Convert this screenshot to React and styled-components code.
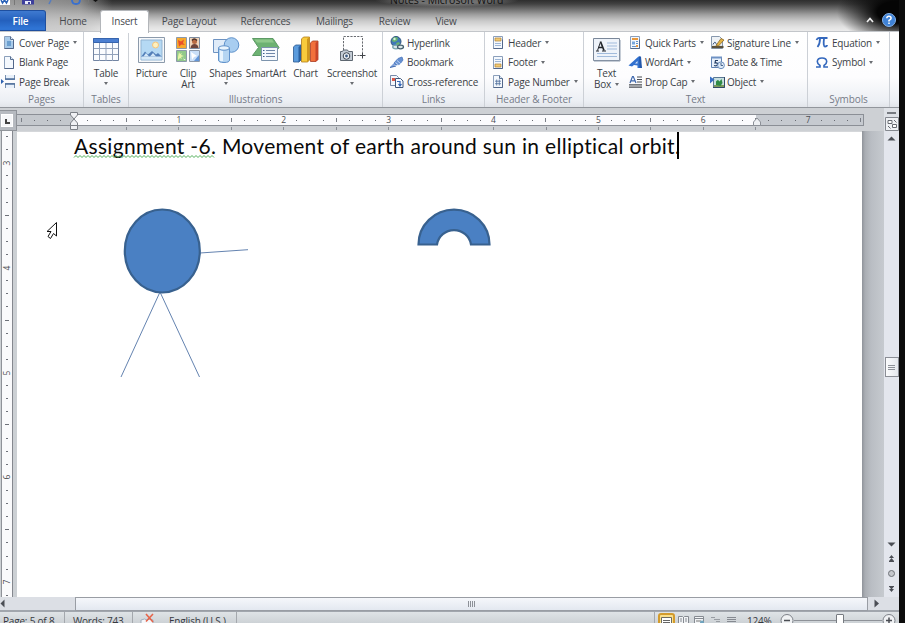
import React from "react";
import styled, { createGlobalStyle } from "styled-components";

const Global = createGlobalStyle`
  * { box-sizing: border-box; }
  html, body { margin: 0; background: #0c0c0c; overflow: hidden; }
  body { font-family: "Open Sans", "Noto Sans", sans-serif; font-size: 10px; letter-spacing: -0.2px; color: #3b3f46; }
  svg { display: block; flex: none; overflow: visible; }
`;

const Screen = styled.div`
  width: 905px; height: 623px; overflow: hidden; background: #0c0c0c;
`;
const Window = styled.div`
  width: 899px; height: 623px; display: flex; flex-direction: column; overflow: hidden; background: #c8ccd1;
`;

/* ---------- title and tabs ---------- */
const Top = styled.header`
  height: 32px; flex: none; display: flex; flex-direction: column; position: relative;
  border-bottom: 1px solid #c3c6ca;
  background:
    radial-gradient(ellipse 62px 32px at 899px 12px, #050505 35%, rgba(5,5,5,0) 100%),
    linear-gradient(90deg, rgba(190,190,190,.75), rgba(190,190,190,.6) 80px, rgba(190,190,190,0) 112px),
    linear-gradient(#2e2e2e 0, #424242 4px, #6d6d6d 9px, #a2a2a2 15px, #cacaca 21px, #e2e2e2 27px, #ececec 31px);
`;
const TitleBar = styled.div`
  height: 10px; flex: none; display: flex; align-items: flex-start; overflow: hidden;
`;
const QuickAccess = styled.div`
  width: 376px; height: 10px; flex: none;
`;
const Title = styled.div`
  width: 142px; padding-left: 14px; font-size: 10.5px; letter-spacing: 0; line-height: 14px; margin-top: -7px; white-space: nowrap; color: #111;
  background: radial-gradient(ellipse at center, rgba(150,150,150,.6) 40%, rgba(150,150,150,0) 72%);
`;
const Tabs = styled.nav`
  height: 22px; flex: none; display: flex; align-items: stretch;
`;
const Tab = styled.div`
  width: ${p => p.$w}px; flex: none; display: flex; align-items: center; justify-content: center;
  white-space: nowrap; color: #46494e; padding-bottom: 1px;
`;
const FileTab = styled(Tab)`
  color: #fff; font-weight: 600; padding-right: 4px; margin-bottom: 1px; padding-bottom: 0;
  background: linear-gradient(#3f7ad0, #2460bd 50%, #2f74d4 90%);
  border: 1px solid #1e4f9f; border-left: 0; border-radius: 0 3px 0 0;
`;
const ActiveTab = styled(Tab)`
  background: #fff; border: 1px solid #b3b6ba; border-bottom: 0; border-radius: 3px 3px 0 0;
  margin-bottom: -1px; padding-bottom: 3px; z-index: 1; 
`;
const TopRight = styled.div`
  margin-left: auto; display: flex; align-items: center; gap: 8px; padding-right: 3px; padding-bottom: 2px;
`;

/* ---------- ribbon ---------- */
const Ribbon = styled.section`
  height: 76px; flex: none; display: flex; border-bottom: 1px solid #92969c;
  background: linear-gradient(#fff, #fdfdfe 60%, #eceff4 92%, #e2e5ea);
`;
const Group = styled.div`
  width: ${p => p.$w}px; flex: none; display: flex; flex-direction: column;
  border-right: 1px solid #ccd0d6;
`;
const GroupBody = styled.div`
  height: 60px; flex: none; display: flex; padding-left: ${p => p.$pad || 0}px; padding-top: 1px;
`;
const GroupName = styled.div`
  height: 14px; line-height: 14px; text-align: center; color: #767b88; white-space: nowrap; letter-spacing: -0.1px;
`;
const Column = styled.div`
  width: ${p => p.$w}px; flex: none; display: flex; flex-direction: column;
`;
const SmallButton = styled.div`
  height: 19.5px; display: flex; align-items: center; white-space: nowrap;
`;
const IconSlot = styled.span`
  width: ${p => p.$w}px; flex: none; display: flex;
`;
const Caret = styled.i`
  width: 0; height: 0; flex: none; border: 2.5px solid transparent; border-top: 3px solid #6a6d72; border-bottom: 0;
  margin: ${p => (p.$big ? "3px 0 0" : "0 0 0 4px")};
`;
const BigButton = styled.div`
  width: ${p => p.$w}px; flex: none; display: flex; flex-direction: column; align-items: center; padding-top: 3px;
`;
const BigIcon = styled.div`
  height: 27px; display: flex; align-items: center;
`;
const BigLabel = styled.div`
  display: flex; flex-direction: column; align-items: center;
  font-size: 10px; line-height: 11px; margin-top: 5px; white-space: nowrap;
`;
const LabelLine = styled.span`
  display: flex; align-items: center; height: 11px;
`;

/* ---------- rulers ---------- */
const RulerBar = styled.div`
  height: 23px; flex: none; display: flex; background: #cdd0d4;
`;
const TabBox = styled.div`
  width: 17px; height: 21px; margin-top: 2px; flex: none; background: #b6bac0; border: 1px solid #8f9399; border-left: 0;
  display: flex; align-items: center; justify-content: center; padding-right: 2px;
`;
const TabGlyph = styled.div`
  width: 12px; height: 13px; background: #f6f7f9; border: 1px solid #fff; padding: 4px 0 0 3px;
`;
const TabMark = styled.div`
  width: 5px; height: 5px; border-left: 2px solid #444; border-bottom: 2px solid #444;
`;
const RulerMain = styled.div`
  width: 847px; flex: none; position: relative; padding-top: 6px;
`;
const RulerStrip = styled.div`
  height: 12px; display: flex; overflow: hidden; border: 1px solid #8b8f96; border-left: 0;
  background: linear-gradient(90deg, #c4c8cd 56px, #fbfbfd 56px, #fbfbfd 739px, #c6cad0 739px);
`;
const Cell = styled.span`
  width: 13.11px; height: 10px; flex: none; display: flex; align-items: center; justify-content: center;
  font-size: 8.5px; line-height: 10px; letter-spacing: 0; color: #4d4f54;
  &:first-child { margin-left: -2px; }
`;
const Tick = styled.i`
  width: 1px; height: ${p => (p.$tall ? 4 : 1)}px; background: ${p => (p.$tall ? "#7b7f87" : "#686b72")};
`;
const SubTicks = styled.div`
  height: 3px; margin: 1px 0 0 109px; display: flex;
`;
const SubTick = styled.i`
  width: 52.44px; height: 3px; flex: none; border-left: 1px solid #8b8f96;
`;
const Marker = styled.svg`
  position: absolute; left: ${p => p.$x}px; top: ${p => p.$y}px;
`;
const RulerCorner = styled.div`
  margin-left: auto; width: 15px; background: #dfe2e7; display: flex; flex-direction: column; align-items: center; gap: 3px; padding-top: 4px;
`;
const SplitHandle = styled.div`
  width: 9px; height: 2px; background: #777b81;
`;

/* ---------- document ---------- */
const Body = styled.div`
  height: 466px; flex: none; display: flex;
`;
const VRuler = styled.div`
  width: 17px; flex: none; padding-left: 1px; background: #ccd0d4;
`;
const VStrip = styled.div`
  width: 12px; height: 466px; overflow: hidden; background: #fafafc; border-left: 1px solid #8f9299; border-right: 1px solid #85888f;
`;
const VCell = styled.div`
  height: 13.11px; display: flex; align-items: center; justify-content: center;
  font-size: 8.5px; color: #4d4f54; letter-spacing: 0;
  &:first-child { margin-top: -1px; }
`;
const VNum = styled.span`
  transform: rotate(-90deg); line-height: 10px;
`;
const VTick = styled.i`
  width: ${p => (p.$tall ? 4 : 2)}px; height: 1px; background: #6e717a;
`;
const Page = styled.main`
  width: 845px; flex: none; position: relative; background: #fff; border-top: 1px solid #d5d7da; padding: 0 0 0 57px;
`;
const Heading = styled.div`
  font-family: Lato, "Noto Sans", sans-serif; font-size: 21px; letter-spacing: 0.31px; line-height: 28px; color: #0a0a0a;
  white-space: nowrap; display: flex;
`;
const Flagged = styled.span`
  position: relative;
`;
const Squiggle = styled.svg`
  position: absolute; left: 0; top: 22px;
`;
const TextCaret = styled.i`
  position: absolute; left: 660px; top: 0; width: 1.5px; height: 27px; background: #000;
`;
const Drawing = styled.svg`
  position: absolute; left: 0; top: -1px;
`;
const Gutter = styled.div`
  width: 22px; flex: none; background: linear-gradient(90deg, #8f939a, #a9adb3 3px, #b9bdc3 9px, #c6cacf);
`;
const VScroll = styled.div`
  width: 15px; flex: none; background: #e3e6ed; display: flex; flex-direction: column; align-items: center;
`;
const Spacer = styled.div`
  height: ${p => p.$h}px; flex: none;
`;
const VThumb = styled.div`
  width: 14px; height: 20px; flex: none; border: 1px solid #8b8e95; background: linear-gradient(90deg, #fbfcfd, #e4e7ec);
  display: flex; flex-direction: column; align-items: center; justify-content: center; gap: 1px;
`;
const Grip = styled.i`
  width: ${p => (p.$v ? 1 : 7)}px; height: ${p => (p.$v ? 6 : 1)}px; background: #8d9198;
`;
const HScroll = styled.div`
  height: 15px; flex: none; display: flex; align-items: center; background: #dcdfe5; border-bottom: 2px solid #a1a6ad;
`;
const ArrowBox = styled.div`
  width: ${p => p.$w}px; flex: none; display: flex;
`;
const HThumb = styled.div`
  width: 793px; height: 14px; flex: none; border: 1px solid #999da4; background: linear-gradient(#f5f7fb, #e3e8f0);
  display: flex; align-items: center; justify-content: center; gap: 1px;
`;

/* ---------- status ---------- */
const Status = styled.footer`
  height: 20px; flex: none; display: flex; align-items: flex-start; background: linear-gradient(#dfe3e6, #cdd2d6 11px);
  color: #36393f; white-space: nowrap;
`;
const StatusItem = styled.div`
  width: ${p => p.$w}px; height: 20px; flex: none; padding: 2px 0 0 ${p => p.$pad}px; line-height: 14px; border-right: 1px solid #a4a8ad; display: flex;
`;
const Views = styled.div`
  margin-left: auto; display: flex; width: 245px; flex: none; border-left: 1px solid #a4a8ad;
`;
const ViewButton = styled.div`
  width: ${p => (p.$on ? 17 : 16)}px; height: 18px; flex: none; display: flex; justify-content: center; padding-top: ${p => (p.$on ? 2 : 4)}px;
  ${p => p.$on && "margin: 1px 0 0 3px; border: 2px solid #d39b2c; border-radius: 3px; background: #fbe08b;"}
`;
const Percent = styled.div`
  width: 32px; line-height: 14px; padding-top: 2px; padding-left: 8px; margin-right: 3px;
`;
const Zoom = styled.div`
  display: flex; align-items: flex-start; padding: 1px 0 0 6px; width: 122px;
`;
const ZoomTrack = styled.div`
  width: 88px; height: 13px; display: flex; padding-left: 42px; background: linear-gradient(transparent 7px, #8e9298 7px, #8e9298 8px, transparent 8px);
`;
const ZoomThumb = styled.i`
  width: 8px; height: 13px; border: 1px solid #777b81; border-radius: 1px; background: #fff; margin-top: 1px;
`;

/* ---------- icons ---------- */
const PageBase = ({ children, fold }) => (
  <svg width="12" height="13" viewBox="0 0 12 13">
    <path d={fold ? "M1.5 .5h6l3 3v9h-9z" : "M1.5 .5h9v12h-9z"} fill="#f4f8fd" stroke="#8b9fbb" />
    <path d="M10.5 3.5v9h-9" fill="none" stroke="#52678a" />
    {fold && <path d="M7.5 .5v3h3" fill="#dbe6f3" stroke="#5a7192" />}
    {children}
  </svg>
);
const small = {
  cover: <PageBase fold><path d="M2 1h5v3l3 1v7H2z" fill="#a9cbea" /><path d="M4 5h4v5H4z" fill="#6da0d0" /></PageBase>,
  blank: <PageBase fold />,
  brk: (
    <svg width="16" height="13" viewBox="0 0 16 13"><path d="M4.500 0v4.500h9V0M4.500 13V8.500h9V13" fill="#e8f0fa" stroke="#7890b0" /><path d="M4 4h10M4 9h10" stroke="#4d6f9c" strokeWidth="1.500" /><path d="M0 4l3 2.500L0 9z" fill="#2e62b0" /></svg>
  ),
  link: (
    <svg width="14" height="14" viewBox="0 0 14 14"><circle cx="6" cy="5.500" r="5" fill="#3e78b8" stroke="#31557e" /><path d="M3 2q3-2 5 0l-1 3-3 1-2-1zM6 7l3-1 1 2-3 2z" fill="#67b26f" /><circle cx="4.500" cy="3" r="1.200" fill="#d6efe2" /><ellipse cx="6" cy="11" rx="3.300" ry="1.800" fill="#dbe8ea" stroke="#76a4ad" strokeWidth="1.300" /><ellipse cx="10.500" cy="11" rx="3" ry="1.800" fill="#dbe8ea" stroke="#45606f" strokeWidth="1.300" /></svg>
  ),
  mark: (
    <svg width="14" height="13" viewBox="0 0 14 13"><path d="M0 11l4-4 2 1.500-3 2.500z" fill="#7d9fd8" /><path d="M4 7l4-4.500 4-1.500 1 3-3 4-4 1z" fill="#6690d2" stroke="#4b77bd" strokeWidth=".8" /><path d="M7 4.500l4 3.500M5.500 6.500l3 2.500" stroke="#c3d7f4" /><path d="M0 11.500l6-1.500" stroke="#3d67ad" /></svg>
  ),
  cross: (
    <svg width="14" height="13" viewBox="0 0 14 13"><path d="M.5 .5h6l2 2v8h-8z" fill="#f4f7fc" stroke="#7689aa" /><path d="M2 3h3v3H2z" fill="#de5848" /><path d="M5.500 3.500h5l2.500 2.500v6.500H5.500z" fill="#f7faff" stroke="#3f577b" /><path d="M7 6.500h3v4M8.500 9l1.500 2 1.500-2" stroke="#3265b6" fill="none" strokeWidth="1.200" /></svg>
  ),
  header: <PageBase><path d="M3 2h6v3H3z" fill="#f1ca73" stroke="#b18437" strokeWidth=".7" /><path d="M3 7.500h6M3 9.500h6" stroke="#9db6d6" /></PageBase>,
  footer: <PageBase><path d="M3 8h6v3H3z" fill="#f1ca73" stroke="#b18437" strokeWidth=".7" /><path d="M3 3.500h6M3 5.500h6" stroke="#9db6d6" /></PageBase>,
  number: <PageBase fold><path d="M4.700 4.500v6M7.300 4.500v6M3 6.200h6M3 8.700h6" stroke="#4b6b9b" strokeWidth=".8" /></PageBase>,
  quick: <PageBase><path d="M3 2h6v2H3z" fill="#e9983d" /><path d="M3 5.500h3v3H3z" fill="#79a7dc" /><path d="M7 5.500h2M7 7.500h2M3 10.500h4" stroke="#6592ca" /><path d="M7 9h2v2H7z" fill="#e9983d" /></PageBase>,
  art: (
    <svg width="14" height="13" viewBox="0 0 14 13"><path d="M-.5 9.500L9.500 .5h1.500v11.500H8.500V9.500L5 9l-2 1.500z" fill="#3271cf" /><path d="M6 7.500l2.500-2.500v2.500z" fill="#d8e6fa" /><path d="M10 .5h2l1 11.500h-2.500z" fill="#2459ab" /></svg>
  ),
  cap: (
    <svg width="13" height="12" viewBox="0 0 13 12"><path d="M1 7l2.500-6.500h.8L7 7M2 4.800h4" stroke="#3f69ae" strokeWidth="1.200" fill="none" /><path d="M8 1h5M8 3.500h5M8 6h5M0 8.800h13M0 11.200h13" stroke="#4a4e54" strokeWidth="1.200" /></svg>
  ),
  sign: (
    <svg width="14" height="13" viewBox="0 0 14 13"><path d="M.5 .5h8l3 3v9H.5z" fill="#eef2f6" stroke="#8798ad" /><path d="M2 8.500q2-4 3-1t3 1" stroke="#34507b" fill="none" /><path d="M1 11h11.500" stroke="#5a513d" strokeWidth="2.200" /><path d="M5 9.500L10 2.500l3 1.500-5.500 6z" fill="#e4b446" stroke="#8c6b2b" strokeWidth=".8" /></svg>
  ),
  date: (
    <svg width="14" height="13" viewBox="0 0 14 13"><path d="M.5 1.500h10v10H.5z" fill="#e9f1fb" stroke="#6283b2" /><path d="M0 .5h11v2H0z" fill="#6f92c4" /><path d="M7 4.500H4.500L4 7q3-.5 2.500 1.500T3 9.500" fill="none" stroke="#263f66" strokeWidth="1.200" /><circle cx="10" cy="9.300" r="3.400" fill="#dfeaf7" stroke="#6d8fbd" /><path d="M10 7v2.500h2" stroke="#46658e" fill="none" /></svg>
  ),
  object: (
    <svg width="15" height="12" viewBox="0 0 15 12"><path d="M2.500 1.500h11v10h-11z" fill="#c8dfe0" stroke="#597893" /><path d="M3 9h10v2H3z" fill="#7d9b5e" /><path d="M5 9V5.500q2-3 3.500 0l2-2.500 1 4-2 3z" fill="#2f8a46" /><path d="M-1 .5l4.500 3-4.500 4z" fill="#3a70c4" /><path d="M13.500 1v10.500H2" stroke="#334a66" fill="none" /></svg>
  ),
  pi: (
    <svg width="12" height="11" viewBox="0 0 12 11"><path d="M.5 3Q1.300 1 3 1h8.500M4 1.500Q4 7 1.500 10M8 1.500Q7 9.500 9 9.500t2-1.500" fill="none" stroke="#3468bd" strokeWidth="1.800" /></svg>
  ),
  omega: (
    <svg width="12" height="11" viewBox="0 0 12 11"><path d="M0 10h4V8.500Q1.300 7 1.300 4.500 1.500 1 6 1t4.700 3.500Q10.700 7 8 8.500V10h4" fill="none" stroke="#3468bd" strokeWidth="1.600" /></svg>
  ),
};

const TableIcon = () => (
  <svg width="26" height="24" viewBox="0 0 26 24"><path d="M.5 .5h25v22H.5z" fill="#fafcff" stroke="#7385a3" /><path d="M.5 .5h25v4H.5z" fill="#4b7fd1" stroke="#3765ae" /><path d="M1 10.500h24M1 16.500h24M6.500 5v18M13 5v18M19.500 5v18" stroke="#92a2bb" /></svg>
);
const PictureIcon = () => (
  <svg width="27" height="26" viewBox="0 0 27 26"><path d="M.5 .5h26v25H.5z" fill="#f7f9fb" stroke="#8c9aab" /><path d="M3 3h21v20H3z" fill="#b5d9f4" stroke="#91b3d2" /><circle cx="17.500" cy="8" r="3" fill="#fff0bd" stroke="#f2c47d" /><path d="M3 20l4-5.500 3 3 4-3.500 4 3.500 2-1.500 4 4z" fill="#537fb9" /><path d="M5.500 19.500L8 16l3 3.500zM12 19.500l3-3.500 3 3.500z" fill="#d5e8f8" /><path d="M3.500 19.500h20v3h-20z" fill="#d3e7f7" /></svg>
);
const ClipIcon = () => (
  <svg width="24" height="25" viewBox="0 0 24 25"><path d="M.5 .5h10v11H.5z" fill="#f7a92c" stroke="#8c99aa" /><path d="M2 3l3 1.500 3-2-1 3.500 2 2-3.500-.500L3 9.500z" fill="#e9502b" /><path d="M13.500 .5h10v11h-10z" fill="#f1d5ba" stroke="#7c8b9f" /><circle cx="18.500" cy="4.500" r="2.500" fill="#b96b43" /><path d="M14.500 11q.5-4 4-4t4 4z" fill="#70453b" /><path d="M16 3.500q2-3 5 0" stroke="#4b3028" fill="none" strokeWidth="1.500" /><path d="M.5 13.500h10v11H.5z" fill="#92c98a" stroke="#8c99aa" /><path d="M3 15l1 2 2-1-1 2 3 1-3 1 1 2-2-1-2 2v-3z" fill="#e7f6a6" /><path d="M7 20l1 2 2 0-2 1z" fill="#fff" /><path d="M13.500 13.500h10v11h-10z" fill="#c9dff8" stroke="#8c99aa" /><path d="M15 15l6 4-3 1-2 3z" fill="#fff" /><path d="M18 24l5-6v6z" fill="#6396d9" /></svg>
);
const ShapesIcon = () => (
  <svg width="26" height="26" viewBox="0 0 26 26"><path d="M.5 2.500h14v13H.5z" fill="#dfebf8" stroke="#6e93c2" /><circle cx="18.500" cy="8" r="7.300" fill="#a8cdf0" stroke="#5f91ca" /><path d="M5.500 11v12q0 2.500 5.500 2.500t5.500-2.500V11z" fill="#b5d5f2" stroke="#5f91ca" /><path d="M7 13v11h3V14z" fill="#e9f4fd" /><ellipse cx="11" cy="11" rx="5.500" ry="2.200" fill="#e9f4fd" stroke="#5f91ca" /></svg>
);
const SmartIcon = () => (
  <svg width="28" height="24" viewBox="0 0 28 24"><path d="M.5 .5h20.500l6 9-6 8H.5l6-8z" fill="#6db272" stroke="#5d9a66" /><path d="M2.500 1.500h17.500l2 3H5z" fill="#8fc98b" /><path d="M9.500 9.500h16v13h-16z" fill="#f4f8fd" stroke="#7c93ad" /><path d="M14 12.500h9M14 15.500h9M14 18.500h9" stroke="#6e86a9" /><path d="M11 12.500h1.500M11 15.500h1.500M11 18.500h1.500" stroke="#3a5e8d" /></svg>
);
const ChartIcon = () => (
  <svg width="26" height="27" viewBox="0 0 26 27"><path d="M.5 11l2-2h5.500v15l-2 2H.5z" fill="#5b9bdc" stroke="#29588f" strokeWidth=".8" /><path d="M5.500 11L8 9v15l-2.500 2.500z" fill="#2a609f" /><path d="M8.500 3l2-2h6v23l-2 2h-6z" fill="#f8cb3c" stroke="#ae7b1d" strokeWidth=".8" /><path d="M14 3l2.500-2v23L14 26.500z" fill="#d0981d" /><path d="M17.500 7l2-2h5.500v18.500l-2 2h-5.500z" fill="#f2703c" stroke="#a73c22" strokeWidth=".8" /><path d="M22.500 7L25 5v18.500L22.500 26z" fill="#c8452a" /></svg>
);
const ShotIcon = () => (
  <svg width="28" height="27" viewBox="0 0 28 27"><path d="M5.500 14V.5h19v16M16 19.500h5" fill="none" stroke="#686b70" strokeDasharray="2.200 1.200" /><path d="M2.500 15.500h2l1-1.500h4l1 1.500h4v9h-12z" fill="#c4ccd5" stroke="#5d6670" /><circle cx="8.500" cy="20" r="3.300" fill="#f0f4f8" stroke="#3f4751" /><circle cx="8.500" cy="20" r="1.400" fill="#3f5d84" /><path d="M24.500 16.500v6M21.500 19.500h6" stroke="#404348" /></svg>
);
const TextBoxIcon = () => (
  <svg width="28" height="24" viewBox="0 0 28 24"><path d="M.5 .5h26v22H.5z" fill="#eef3fa" stroke="#7a8799" /><path d="M1 23h26V2" fill="none" stroke="#8e9bad" /><path d="M4.500 12.500L7.500 4" stroke="#23272d" fill="none" /><path d="M7.500 3.500l3.500 9M5.200 9.500h4.500" fill="none" stroke="#23272d" strokeWidth="1.700" /><path d="M3 13h3M9 13h4" stroke="#23272d" /><path d="M14 5h10M14 8h10M14 11h10M4 15.500h20M4 18.500h20" stroke="#a1bbdc" /></svg>
);

const Arrow = ({ d }) => <svg width="9" height="9" viewBox="0 0 9 9"><path d={d} fill="#4b4e55" /></svg>;

/* ---------- parts ---------- */
const Small = ({ icon, slot, caret, children }) => (
  <SmallButton><IconSlot $w={slot}>{small[icon]}</IconSlot>{children}{caret && <Caret />}</SmallButton>
);
const Big = ({ w, icon, lines, caret, inlineCaret }) => (
  <BigButton $w={w}>
    <BigIcon>{icon}</BigIcon>
    <BigLabel>
      {lines.map((line, i) => (
        <LabelLine key={line}>{line}{inlineCaret && i === lines.length - 1 && <Caret />}</LabelLine>
      ))}
    </BigLabel>
    {caret && <Caret $big />}
  </BigButton>
);

const PageBreakRow = styled.div`
  margin-left: -2px;
`;

const rulerCells = Array.from({ length: 65 }, (_, i) => i - 4);
const verticalCells = Array.from({ length: 37 }, (_, i) => i + 22);
const defaultTabs = Array.from({ length: 13 }, (_, i) => i);

function RibbonGroups() {
  return (
    <Ribbon>
      <Group $w={84}>
        <GroupBody $pad={3}>
          <Column $w={80}>
            <Small icon="cover" slot={16} caret>Cover Page</Small>
            <Small icon="blank" slot={16}>Blank Page</Small>
            <PageBreakRow><Small icon="brk" slot={18}>Page Break</Small></PageBreakRow>
          </Column>
        </GroupBody>
        <GroupName>Pages</GroupName>
      </Group>
      <Group $w={45}>
        <GroupBody><Big w={44} icon={<TableIcon />} lines={["Table"]} caret /></GroupBody>
        <GroupName>Tables</GroupName>
      </Group>
      <Group $w={254}>
        <GroupBody>
          <Big w={45} icon={<PictureIcon />} lines={["Picture"]} />
          <Big w={28} icon={<ClipIcon />} lines={["Clip", "Art"]} />
          <Big w={47} icon={<ShapesIcon />} lines={["Shapes"]} caret />
          <Big w={34} icon={<SmartIcon />} lines={["SmartArt"]} />
          <Big w={45} icon={<ChartIcon />} lines={["Chart"]} />
          <Big w={48} icon={<ShotIcon />} lines={["Screenshot"]} caret />
        </GroupBody>
        <GroupName>Illustrations</GroupName>
      </Group>
      <Group $w={102}>
        <GroupBody $pad={7}>
          <Column $w={90}>
            <Small icon="link" slot={17}>Hyperlink</Small>
            <Small icon="mark" slot={17}>Bookmark</Small>
            <Small icon="cross" slot={17}>Cross-reference</Small>
          </Column>
        </GroupBody>
        <GroupName>Links</GroupName>
      </Group>
      <Group $w={99}>
        <GroupBody $pad={7}>
          <Column $w={90}>
            <Small icon="header" slot={16} caret>Header</Small>
            <Small icon="footer" slot={16} caret>Footer</Small>
            <Small icon="number" slot={16} caret>Page Number</Small>
          </Column>
        </GroupBody>
        <GroupName>Header &amp; Footer</GroupName>
      </Group>
      <Group $w={224}>
        <GroupBody>
          <Big w={45} icon={<TextBoxIcon />} lines={["Text", "Box"]} inlineCaret />
          <Column $w={82}>
            <Small icon="quick" slot={16} caret>Quick Parts</Small>
            <Small icon="art" slot={16} caret>WordArt</Small>
            <Small icon="cap" slot={16} caret>Drop Cap</Small>
          </Column>
          <Column $w={92}>
            <Small icon="sign" slot={16} caret>Signature Line</Small>
            <Small icon="date" slot={16}>Date &amp; Time</Small>
            <Small icon="object" slot={16} caret>Object</Small>
          </Column>
        </GroupBody>
        <GroupName>Text</GroupName>
      </Group>
      <Group $w={82}>
        <GroupBody $pad={8}>
          <Column $w={72}>
            <Small icon="pi" slot={16} caret>Equation</Small>
            <Small icon="omega" slot={16} caret>Symbol</Small>
          </Column>
        </GroupBody>
        <GroupName>Symbols</GroupName>
      </Group>
    </Ribbon>
  );
}

export default function App() {
  return (
    <Screen>
      <Global />
      <Window>
        <Top>
          <TitleBar>
            <QuickAccess>
              <svg width="110" height="10" viewBox="0 0 110 10">
                <path d="M0 0h10v5H0z" fill="#fff" /><path d="M1 0l1.500 3L4.500 0l2 3L8 0" fill="none" stroke="#2a62b8" strokeWidth="1.500" /><path d="M14.500 0v5M88.500 0v5" stroke="#777" />
                <path d="M22 0h12v4.500H22z" fill="#3d3f9c" /><path d="M25 1h6v3h-6z" fill="#e7eafa" /><path d="M28 2h2v2h-2z" fill="#3d3f9c" />
                <path d="M51 0l-2 4" stroke="#557dc0" strokeWidth="1.500" /><path d="M72 0q0 4 4 4t4-4" fill="none" stroke="#3970cf" strokeWidth="1.800" /><path d="M93 0h5l-2.500 2z" fill="#111" />
              </svg>
            </QuickAccess>
            <Title>Notes - Microsoft Word</Title>
          </TitleBar>
          <Tabs>
            <FileTab $w={46}>File</FileTab>
            <Tab $w={54}>Home</Tab>
            <ActiveTab $w={49}>Insert</ActiveTab>
            <Tab $w={80}>Page Layout</Tab>
            <Tab $w={73}>References</Tab>
            <Tab $w={65}>Mailings</Tab>
            <Tab $w={55}>Review</Tab>
            <Tab $w={48}>View</Tab>
            <TopRight>
              <svg width="8" height="6" viewBox="0 0 8 6"><path d="M1 5l3-3.500L7 5" fill="none" stroke="#eee" strokeWidth="1.700" /></svg>
              <svg width="14" height="14" viewBox="0 0 14 14"><circle cx="7" cy="7" r="6.500" fill="#3f82d6" stroke="#87b4ea" /><path d="M4.800 5.300Q4.900 3.300 7 3.300t2.100 1.900Q9.100 6.300 7 7.400V8.500M7 9.600v1.500" fill="none" stroke="#fff" strokeWidth="1.500" /></svg>
            </TopRight>
          </Tabs>
        </Top>
        <RibbonGroups />
        <RulerBar>
          <TabBox><TabGlyph><TabMark /></TabGlyph></TabBox>
          <RulerMain>
            <RulerStrip>
              {rulerCells.map(i => (
                <Cell key={i}>{i === 0 ? null : i > 0 && i % 8 === 0 ? i / 8 : <Tick $tall={i % 4 === 0} />}</Cell>
              ))}
            </RulerStrip>
            <SubTicks>{defaultTabs.map(i => <SubTick key={i} />)}</SubTicks>
            <Marker $x={52} $y={4} width="10" height="19" viewBox="0 0 10 19">
              <path d="M1.500 .5h7v2.500L5 7 1.500 3zM5 7l3.500 4v2.500h-7V11zM1.500 13.500h7v4h-7z" fill="#f0f1f4" stroke="#7c8087" />
            </Marker>
            <Marker $x={735} $y={9} width="10" height="9" viewBox="0 0 10 9">
              <path d="M5 1l3.500 4v3.500h-7V5z" fill="#eef0f3" stroke="#8c9097" />
            </Marker>
          </RulerMain>
          <RulerCorner>
            <SplitHandle />
            <svg width="14" height="14" viewBox="0 0 14 14"><path d="M.5 .5h13v13H.5z" fill="#eff1f4" stroke="#84888f" /><path d="M3 3.500h4v3H3zM7.500 7.500h4v3h-4z" fill="#fff" stroke="#666a71" /><path d="M9 3l2.500 2.500M3 9l2.500 2.500" stroke="#666a71" /></svg>
          </RulerCorner>
        </RulerBar>
        <Body>
          <VRuler>
            <VStrip>
              {verticalCells.map(i => (
                <VCell key={i}>{i % 8 === 0 ? <VNum>{i / 8}</VNum> : <VTick $tall={i % 4 === 0} />}</VCell>
              ))}
            </VStrip>
          </VRuler>
          <Page>
            <Heading>
              <Flagged>
                Assignment -6.
                <Squiggle width="142" height="5" viewBox="0 0 142 5">
                  <path d={"M0 3.5" + "l2 -2l2 2".repeat(35)} fill="none" stroke="#4fae57" />
                </Squiggle>
              </Flagged>
              <span>&nbsp;Movement of earth around sun in elliptical orbit.</span>
            </Heading>
            <TextCaret />
            <Drawing width="845" height="466" viewBox="17 131 845 466">
              <g stroke="#6483b0" strokeWidth="1" fill="none">
                <path d="M200 253L248 249.700M160 292L121 377M160 292L199.500 377" />
              </g>
              <ellipse cx="162.300" cy="251" rx="37.500" ry="41.500" fill="#4a80c3" stroke="#38618f" strokeWidth="2.200" />
              <path d="M418.500 244.500A35.500 34.800 0 0 1 489.500 244.500H471A17.200 17 0 0 0 437 244.500Z" fill="#4a80c3" stroke="#38618f" strokeWidth="2.200" />
              <path d="M56.500 222.500L47 231.500H51L48 236.500L50.500 238.500L53.500 233.500L56.500 236Z" fill="#fff" stroke="#111" strokeWidth="1" />
            </Drawing>
          </Page>
          <Gutter />
          <VScroll>
            <Spacer $h={3} />
            <Arrow d="M.5 6.500h8l-4-4z" />
            <Spacer $h={214} />
            <VThumb><Grip /><Grip /><Grip /></VThumb>
            <Spacer $h={163} />
            <Arrow d="M.5 2.500h8l-4 4z" />
            <Spacer $h={5} />
            <Arrow d="M2 4h5L4.500 1zM2 7h5L4.500 4zM2 7h5v1H2z" />
            <Spacer $h={6} />
            <svg width="9" height="9" viewBox="0 0 9 9"><circle cx="4.500" cy="4.500" r="3" fill="#c5c8cd" stroke="#6e7278" /></svg>
            <Spacer $h={6} />
            <Arrow d="M2 2h5v1H2zM2 2.500h5l-2.500 3zM2 5h5L4.500 8z" />
          </VScroll>
        </Body>
        <HScroll>
          <ArrowBox $w={75}><Arrow d="M4.500 .5v8l-4-4z" /></ArrowBox>
          <HThumb><Grip $v /><Grip $v /><Grip $v /><Grip $v /></HThumb>
          <ArrowBox $w={20}>
            <svg width="20" height="9" viewBox="0 0 20 9"><path d="M6.500 .5v8l4.500-4z" fill="#4b4e55" /></svg>
          </ArrowBox>
        </HScroll>
        <Status>
          <StatusItem $w={65} $pad={3}>Page: 5 of 8</StatusItem>
          <StatusItem $w={68} $pad={8}>Words: 743</StatusItem>
          <StatusItem $w={104} $pad={7}>
            <svg width="29" height="14" viewBox="0 0 29 14"><path d="M1 6q4-2 6 0 3-2 6 0v7H1z" fill="#f5f7fa" stroke="#a2afbf" /><path d="M6 0l7 8M13 0L6 7.500" stroke="#e5644a" strokeWidth="1.600" /></svg>
            English (U.S.)
          </StatusItem>
          <Views>
            <ViewButton $on><svg width="11" height="12" viewBox="0 0 11 12"><path d="M.5 .5h10v11H.5z" fill="#fff" stroke="#6d6b60" /><path d="M2 3.500h7M2 5.500h7" stroke="#666" /></svg></ViewButton>
            <ViewButton><svg width="11" height="10" viewBox="0 0 11 10"><path d="M.5 .5h4l1 1 1-1h4v9H.5zM5.500 1v8" fill="#f2f4f6" stroke="#858a91" /><path d="M2 3h2M2 5h2M7 3h2M7 5h2" stroke="#858a91" /></svg></ViewButton>
            <ViewButton><svg width="10" height="10" viewBox="0 0 10 10"><path d="M.5 .5h9v9h-9zM1 2.500h8" fill="#f2f4f6" stroke="#858a91" /><path d="M2 5h5" stroke="#777" /><circle cx="8" cy="6.500" r="2" fill="#6fa4bf" /></svg></ViewButton>
            <ViewButton><svg width="9" height="10" viewBox="0 0 9 10"><path d="M0 1.500h4M3 3.500h6M5 5.500h4" stroke="#999da3" /></svg></ViewButton>
            <ViewButton><svg width="9" height="10" viewBox="0 0 9 10"><path d="M0 1.500h9M0 3.500h9M0 5.500h9" stroke="#868a91" /></svg></ViewButton>
            <Percent>124%</Percent>
            <Zoom>
              <svg width="14" height="14" viewBox="0 0 14 14"><circle cx="7" cy="7.500" r="6" fill="#f0f2f4" stroke="#7d8188" /><path d="M4 7.500h6" stroke="#4a4d53" strokeWidth="1.500" /></svg>
              <ZoomTrack><ZoomThumb /></ZoomTrack>
              <svg width="14" height="14" viewBox="0 0 14 14"><circle cx="7" cy="7.500" r="6" fill="#f0f2f4" stroke="#7d8188" /><path d="M4 7.500h6M7 4.500v6" stroke="#4a4d53" strokeWidth="1.500" /></svg>
            </Zoom>
          </Views>
        </Status>
      </Window>
    </Screen>
  );
}
